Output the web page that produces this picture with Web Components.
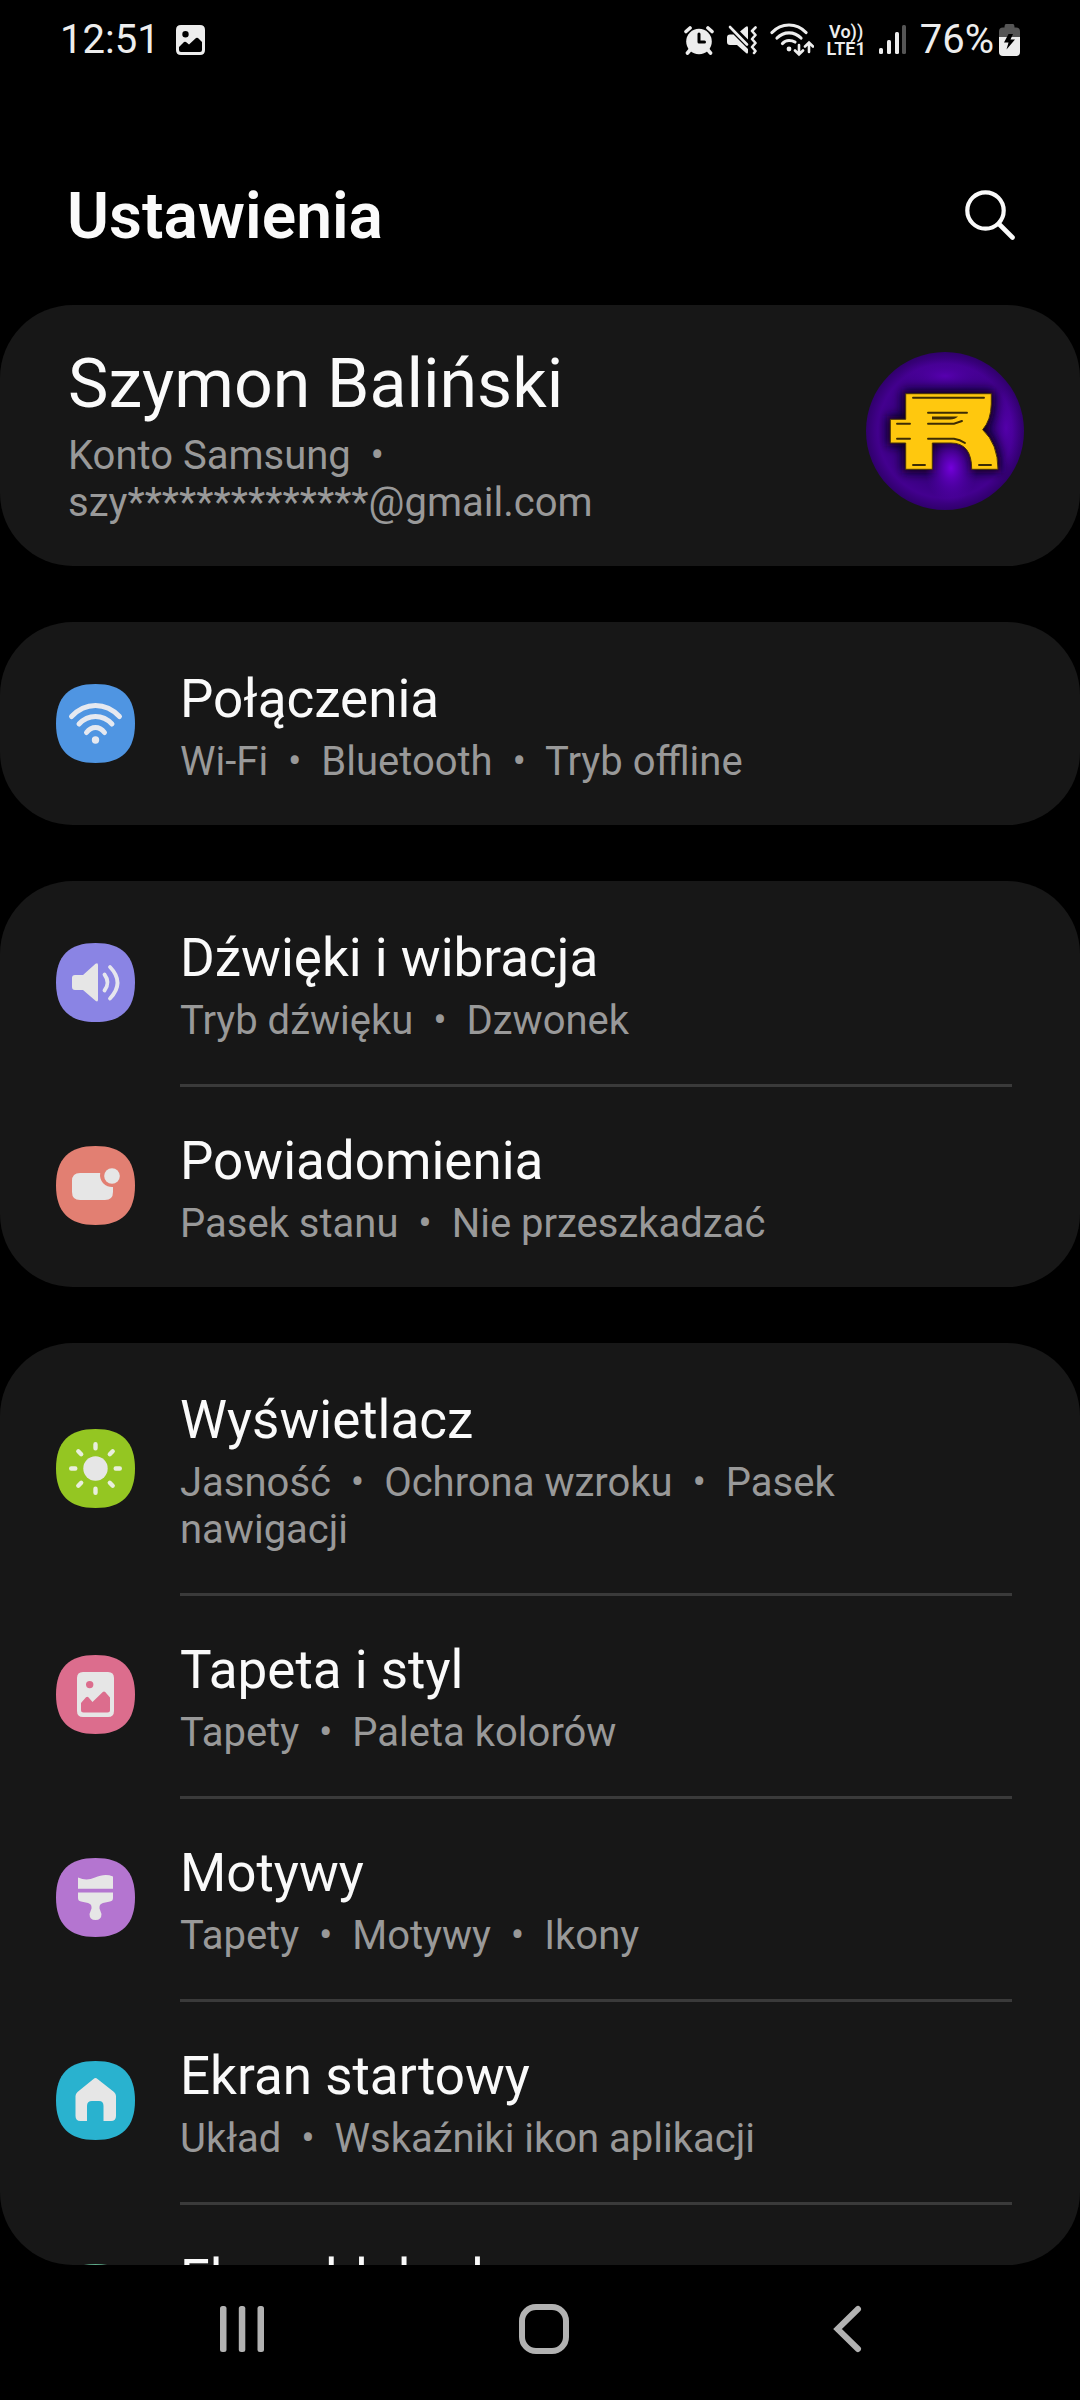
<!DOCTYPE html>
<html lang="pl">
<head>
<meta charset="utf-8">
<meta name="viewport" content="width=device-width, initial-scale=1">
<title>Ustawienia</title>
<style>
    html, body {
        margin: 0;
        height: 100%;
        background: #000;
    }
    body {
        font-family: Roboto, "Noto Sans", sans-serif;
        color: #fafafa;
    }
</style>
</head>
<body>
<settings-screen>
    <status-bar slot="status" time="12:51" battery="76%"></status-bar>
    <page-header slot="header">Ustawienia</page-header>

    <settings-card>
        <account-row>
            <span slot="name">Szymon Baliński</span>
            Konto Samsung &nbsp;•&nbsp; szy**************@gmail.com
        </account-row>
    </settings-card>

    <settings-card>
        <settings-row icon="wifi" color="#4f95e2">
            <span slot="title">Połączenia</span>
            Wi-Fi &nbsp;•&nbsp; Bluetooth &nbsp;•&nbsp; Tryb offline
        </settings-row>
    </settings-card>

    <settings-card>
        <settings-row icon="sound" color="#8a84e4">
            <span slot="title">Dźwięki i wibracja</span>
            Tryb dźwięku &nbsp;•&nbsp; Dzwonek
        </settings-row>
        <settings-row icon="notifications" color="#e27f72">
            <span slot="title">Powiadomienia</span>
            Pasek stanu &nbsp;•&nbsp; Nie przeszkadzać
        </settings-row>
    </settings-card>

    <settings-card>
        <settings-row icon="display" color="#94c622">
            <span slot="title">Wyświetlacz</span>
            Jasność &nbsp;•&nbsp; Ochrona wzroku &nbsp;•&nbsp; Pasek nawigacji
        </settings-row>
        <settings-row icon="wallpaper" color="#dc6d8d">
            <span slot="title">Tapeta i styl</span>
            Tapety &nbsp;•&nbsp; Paleta kolorów
        </settings-row>
        <settings-row icon="themes" color="#b475d0">
            <span slot="title">Motywy</span>
            Tapety &nbsp;•&nbsp; Motywy &nbsp;•&nbsp; Ikony
        </settings-row>
        <settings-row icon="home" color="#29b2cf">
            <span slot="title">Ekran startowy</span>
            Układ &nbsp;•&nbsp; Wskaźniki ikon aplikacji
        </settings-row>
        <settings-row icon="lock" color="#5fae8c">
            <span slot="title">Ekran blokady</span>
        </settings-row>
    </settings-card>

    <nav-bar slot="nav"></nav-bar>
</settings-screen>

<script>
// glyphs inside the coloured 79x79 tiles
const icons = {
    wifi: `
        <g fill="none" stroke="#e6e9f0" stroke-width="5" stroke-linecap="round">
            <path d="M15.500 32.500Q26 21.500 39.500 21.500T63.500 32.500"/>
            <path d="M23 40Q30 32.500 39.500 32.500T56 40"/>
            <path d="M30.500 48.500Q34.500 43.500 39.500 43.500T48.500 48.500"/>
        </g>
        <circle cx="39.500" cy="56" r="3.700" fill="#e6e9f0"/>`,
    sound: `
        <path fill="#e6e6e6" d="M19 32H27L39.500 20.800Q42 19 42 22V56.500Q42 59.500 39.500 57.700L27 47H19Q16 47 16 44V35Q16 32 19 32Z"/>
        <g fill="none" stroke="#e6e6ee" stroke-width="3.800" stroke-linecap="round">
            <path d="M48.500 31.500Q54.500 39.500 48.500 47.500"/>
            <path d="M54 24Q69 39.500 54 55.500"/>
        </g>`,
    notifications: `
        <path fill="#e6e6e6" d="M24 27H44.200A12 12 0 0 0 57 41V46Q57 54 49 54H24Q16 54 16 46V35Q16 27 24 27Z"/>
        <circle cx="56" cy="30" r="7.800" fill="#e6e6e6"/>`,
    display: `
        <circle cx="39.500" cy="39.500" r="12.200" fill="#e6e6e6"/>
        <g stroke="#e9eedd" stroke-width="4.400" stroke-linecap="round">
            <path d="M39.500 15.200V19.300M39.500 59.700V63.800M15.200 39.500H19.300M59.700 39.500H63.800"/>
            <path d="M22.300 22.300L25.200 25.200M53.800 53.800L56.700 56.700M22.300 56.700L25.200 53.800M53.800 25.200L56.700 22.300"/>
        </g>`,
    wallpaper: `
        <path fill="#e6e6e6" fill-rule="evenodd" d="M27 17H52Q58 17 58 23V56Q58 62 52 62H27Q21 62 21 56V23Q21 17 27 17Z
            M25 48L30 42.300Q31.200 41 32.400 42.300L36.500 47L46.800 37Q48 36 49.200 37L54 42.500V55Q54 57.500 51.500 57.500H27.500Q25 57.500 25 55Z
            M33.700 25.900A3.700 3.700 0 1 0 33.700 33.300A3.700 3.700 0 1 0 33.700 25.900Z"/>`,
    themes: `
        <path fill="#e6e6e6" d="M22 19.500C28 22 33 22 39 19.500C45 17 51 16 57 18.500V30.700H22Z"/>
        <path fill="#e6e6e6" d="M22 34.500H57V40Q57 43 54 43.500L47 45Q43.500 46 43.500 49V50.500L45.500 56Q45.500 62 39.500 62T33.500 56L35.500 50.500V49Q35.500 46 32 45L25 43.500Q22 43 22 40Z"/>`,
    home: `
        <path fill="#e6e6e6" d="M37.500 18Q39.500 16.200 41.500 18L58 31Q60 32.800 60 35V55Q60 60 55 60H47.500V45Q47.500 40 43 40H36Q31 40 31 45V60H24.500Q19.500 60 19.500 55V35Q19.500 32.800 21.500 31Z"/>`,
    lock: `
        <rect x="24" y="36" width="31" height="24" rx="5" fill="#e6e6e6"/>
        <path fill="none" stroke="#e6e6e6" stroke-width="5" d="M30 37V29Q30 20 39.500 20T49 29V37"/>`
};

function makeTemplate(html) {
    const template = document.createElement('template');
    template.innerHTML = html;
    return template;
}

const screenTemplate = makeTemplate(`
    <style>
    :host {
        display: flex;
        flex-direction: column;
        height: 100vh;
    }
    .list {
        flex: 1;
        min-height: 0;
        display: flex;
        flex-direction: column;
        gap: 56px;
        overflow: hidden;
        border-radius: 0 0 73px 73px;
    }
    ::slotted(*) {
        flex-shrink: 0;
    }
    </style>
    <slot name="status"></slot>
    <slot name="header"></slot>
    <main class="list"><slot></slot></main>
    <slot name="nav"></slot>
`);

class SettingsScreen extends HTMLElement {
    constructor() {
        super();
        this.attachShadow({mode: 'open'});
        this.shadowRoot.appendChild(screenTemplate.content.cloneNode(true));
    }
}

const statusTemplate = makeTemplate(`
    <style>
    :host {
        display: flex;
        justify-content: space-between;
        align-items: center;
        height: 80px;
        padding: 0 60px;
        font-size: 40px;
        line-height: 48px;
        color: #ededed;
    }
    div {
        display: flex;
        align-items: center;
        gap: 13px;
    }
    .left {
        gap: 16px;
    }
    .power {
        gap: 5px;
    }
    .volte {
        display: block;
        font-size: 18px;
        line-height: 17px;
        font-weight: 600;
        text-align: center;
    }
    svg {
        display: block;
        fill: #ededed;
    }
    </style>
    <div class="left">
        <span class="time"></span>
        <svg width="29" height="30" viewBox="0 0 29 30">
            <path fill-rule="evenodd" d="M5 0H24Q29 0 29 5V25Q29 30 24 30H5Q0 30 0 25V5Q0 0 5 0Z
                M3 22L8 17Q9 16.300 10 17L13 19.500L20 13Q21 12.300 22 13L26 17V25Q26 27 24 27H5Q3 27 3 25Z
                M9.500 6A3.200 3.200 0 1 0 9.500 12.400A3.200 3.200 0 1 0 9.500 6Z"/>
        </svg>
    </div>
    <div>
        <svg width="30" height="29" viewBox="0 0 30 29">
            <circle cx="15" cy="15.500" r="12.800"/>
            <path d="M2 5.500L6 2M28 5.500L24 2M6 24L3.500 27M24 24L26.500 27" stroke="#ededed" stroke-width="3.600" stroke-linecap="round"/>
            <path d="M15 8V16H20.500" fill="none" stroke="#000" stroke-width="3" stroke-linecap="round" stroke-linejoin="round"/>
        </svg>
        <svg width="30" height="30" viewBox="0 0 30 30">
            <path d="M3 9.500H6.500L21 24V27Q21 29.500 19 28L10 20H3Q0 20 0 17V12.500Q0 9.500 3 9.500Z"/>
            <path d="M13 6.500L18.500 2Q21 0 21 3V14.500Z"/>
            <path d="M3 2L20 19.500" stroke="#ededed" stroke-width="2.600" stroke-linecap="round"/>
            <path d="M28.500 2.500L25 6L28.500 10L25 14L28.500 18L25 22L28.500 26L27 28" fill="none" stroke="#ededed" stroke-width="2.600" stroke-linecap="round" stroke-linejoin="round"/>
        </svg>
        <svg width="44" height="34" viewBox="0 0 44 34">
            <g fill="none" stroke="#ededed" stroke-width="3.200" stroke-linecap="round">
                <path d="M2 9.500Q9 2 19 2T36 9.500"/>
                <path d="M7 15Q12 9.800 19 9.800T31 15"/>
                <path d="M12.500 20.500Q15 17.500 19 17.500Q22.500 17.500 25 19"/>
                <path d="M29 22V31M25 27.500L29 31.500L33 27.500M39 29V20M35 23.500L39 19.500L43 23.500" stroke-width="2.600"/>
            </g>
            <circle cx="19" cy="26" r="2.400"/>
        </svg>
        <span class="volte">Vo))<br>LTE1</span>
        <svg width="28" height="30" viewBox="0 0 28 30">
            <rect x="0" y="23" width="4" height="6" rx="1.500"/>
            <rect x="8" y="15" width="4" height="14" rx="1.500"/>
            <rect x="16" y="7" width="4" height="22" rx="1.500"/>
            <rect x="23" y="0" width="4" height="29" rx="1.500" fill="#555"/>
        </svg>
        <div class="power">
            <span class="battery"></span>
            <svg width="21" height="32" viewBox="0 0 21 32">
                <path fill="#555" d="M7 0H14Q15.500 0 15.500 3.500H17Q21 3.500 21 7.500V13H0V7.500Q0 3.500 4 3.500H5.500Q5.500 0 7 0Z"/>
                <path d="M0 13H21V28Q21 32 17 32H4Q0 32 0 28Z"/>
                <path fill="#000" d="M9.500 10L5 18.500H9.500L7.500 25.500L16 15.500H11.500L14 10Z"/>
            </svg>
        </div>
    </div>
`);

class StatusBar extends HTMLElement {
    constructor() {
        super();
        this.attachShadow({mode: 'open'});
        this.shadowRoot.appendChild(statusTemplate.content.cloneNode(true));
    }
    connectedCallback() {
        this.shadowRoot.querySelector('.time').textContent = this.getAttribute('time');
        this.shadowRoot.querySelector('.battery').textContent = this.getAttribute('battery');
    }
}

const headerTemplate = makeTemplate(`
    <style>
    :host {
        display: flex;
        justify-content: space-between;
        align-items: center;
        box-sizing: border-box;
        height: 225px;
        padding: 48px 64px 0 67px;
    }
    h1 {
        margin: 0;
        font-size: 64px;
        line-height: 76px;
        font-weight: 600;
    }
    button {
        padding: 0 0 6px;
        border: none;
        background: none;
        cursor: pointer;
    }
    svg {
        display: block;
    }
    </style>
    <h1><slot></slot></h1>
    <button aria-label="Szukaj">
        <svg width="52" height="52" viewBox="0 0 52 52" fill="none" stroke="#fafafa" stroke-linecap="round">
            <circle cx="21.500" cy="22.500" r="18.200" stroke-width="4.200"/>
            <path d="M35 36L48.500 49.500" stroke-width="4.600"/>
        </svg>
    </button>
`);

class PageHeader extends HTMLElement {
    constructor() {
        super();
        this.attachShadow({mode: 'open'});
        this.shadowRoot.appendChild(headerTemplate.content.cloneNode(true));
    }
}

const cardTemplate = makeTemplate(`
    <style>
    :host {
        display: block;
        background: #171717;
        border-radius: 73px;
        overflow: hidden;
    }
    </style>
    <slot></slot>
`);

class SettingsCard extends HTMLElement {
    constructor() {
        super();
        this.attachShadow({mode: 'open'});
        this.shadowRoot.appendChild(cardTemplate.content.cloneNode(true));
    }
    connectedCallback() {
        // every row but the first one draws a line above itself
        this.shadowRoot.querySelector('slot').assignedElements().forEach((row, i) => {
            row.toggleAttribute('divided', i > 0);
        });
    }
}

const accountTemplate = makeTemplate(`
    <style>
    :host {
        display: block;
    }
    a {
        display: flex;
        align-items: center;
        justify-content: space-between;
        gap: 24px;
        padding: 39px 56px 40px 68px;
        color: inherit;
        text-decoration: none;
    }
    .name {
        font-size: 68px;
        line-height: 80px;
        margin-bottom: 8px;
    }
    .info {
        font-size: 40px;
        line-height: 47px;
        color: #999;
    }
    svg {
        display: block;
        flex-shrink: 0;
        margin-bottom: 8px;
    }
    </style>
    <a href="#account">
        <div>
            <div class="name"><slot name="name"></slot></div>
            <div class="info"><slot></slot></div>
        </div>
        <svg width="158" height="158" viewBox="0 0 158 158" role="img" aria-label="Zdjęcie profilowe">
            <defs>
                <radialGradient id="base">
                    <stop offset="0" stop-color="#20004c"/>
                    <stop offset="0.600" stop-color="#35007c"/>
                    <stop offset="0.850" stop-color="#43008f"/>
                    <stop offset="1" stop-color="#30006c"/>
                </radialGradient>
                <radialGradient id="glow">
                    <stop offset="0" stop-color="#7400dc"/>
                    <stop offset="1" stop-color="#5200ac" stop-opacity="0"/>
                </radialGradient>
                <filter id="shade" x="-20%" y="-20%" width="140%" height="140%">
                    <feGaussianBlur stdDeviation="5"/>
                </filter>
                <path id="mark" d="M39.700 41.700H125.300V52Q125 68 116.700 77.700Q132 92 132 117.300H105.700Q105.700 91 85 91H66.300V117.300H39.700V91H24.300V67.300H39.700Z"/>
            </defs>
            <circle cx="79" cy="79" r="79" fill="url(#base)"/>
            <ellipse cx="79" cy="24" rx="46" ry="18" fill="url(#glow)" opacity="0.500"/>
            <ellipse cx="140" cy="76" rx="16" ry="40" fill="url(#glow)" opacity="0.400"/>
            <use href="#mark" fill="#0c001c" stroke="#0c001c" stroke-width="7" filter="url(#shade)"/>
            <ellipse cx="85" cy="116" rx="26" ry="36" fill="url(#glow)"/>
            <use href="#mark" fill="#ffc80e" stroke="#4d3606" stroke-width="1"/>
            <g fill="none" stroke="#3d2c04" stroke-width="1.900" stroke-linecap="round">
                <path d="M47 45.700H118M62 60.700H101M31 71.700H44M31 86.700H44M47 113H59M113 113H125"/>
                <path d="M62 71.700H88L96 69M62 86.700H88Q94 87.500 99 91"/>
            </g>
            <path fill="#3d2c04" d="M66 64.500H92Q89 67.500 84 67.500H66Z"/>
        </svg>
    </a>
`);

class AccountRow extends HTMLElement {
    constructor() {
        super();
        this.attachShadow({mode: 'open'});
        this.shadowRoot.appendChild(accountTemplate.content.cloneNode(true));
    }
}

const rowTemplate = makeTemplate(`
    <style>
    :host {
        display: block;
    }
    a {
        display: flex;
        align-items: center;
        min-height: 203px;
        padding-left: 56px;
        gap: 45px;
        color: inherit;
        text-decoration: none;
    }
    svg {
        display: block;
        flex-shrink: 0;
    }
    .text {
        flex: 1;
        align-self: stretch;
        box-sizing: border-box;
        margin-right: 68px;
        padding: 46px 0 40px;
    }
    :host([divided]) .text {
        border-top: 3px solid #3a3a3a;
        padding-top: 43px;
    }
    .title {
        font-size: 53px;
        line-height: 62px;
        margin-bottom: 8px;
    }
    .info {
        font-size: 40px;
        line-height: 47px;
        color: #999;
    }
    </style>
    <a>
        <svg width="79" height="79" viewBox="0 0 79 79" aria-hidden="true">
            <path class="tile" d="M39.500 0C66 0 79 13 79 39.500S66 79 39.500 79S0 66 0 39.500S13 0 39.500 0Z"/>
            <g class="glyph"></g>
        </svg>
        <div class="text">
            <div class="title"><slot name="title"></slot></div>
            <div class="info"><slot></slot></div>
        </div>
    </a>
`);

class SettingsRow extends HTMLElement {
    constructor() {
        super();
        this.attachShadow({mode: 'open'});
        this.shadowRoot.appendChild(rowTemplate.content.cloneNode(true));
    }
    connectedCallback() {
        const icon = this.getAttribute('icon');
        this.shadowRoot.querySelector('a').href = '#' + icon;
        this.shadowRoot.querySelector('.tile').setAttribute('fill', this.getAttribute('color'));
        this.shadowRoot.querySelector('.glyph').innerHTML = icons[icon];
    }
}

const navTemplate = makeTemplate(`
    <style>
    :host {
        display: block;
    }
    nav {
        display: grid;
        grid-template-columns: repeat(3, 1fr);
        height: 128px;
        padding: 0 82px 7px 91px;
    }
    button {
        display: flex;
        align-items: center;
        justify-content: center;
        padding: 0;
        border: none;
        background: none;
        cursor: pointer;
    }
    </style>
    <nav>
        <button aria-label="Ostatnie">
            <svg width="50" height="50" viewBox="0 0 50 50" fill="#b2b2b2">
                <rect x="3" y="2" width="6.500" height="46" rx="2.500"/>
                <rect x="21.800" y="2" width="6.500" height="46" rx="2.500"/>
                <rect x="40.500" y="2" width="6.500" height="46" rx="2.500"/>
            </svg>
        </button>
        <button aria-label="Ekran główny">
            <svg width="50" height="50" viewBox="0 0 50 50">
                <rect x="3" y="3" width="44" height="44" rx="14" fill="none" stroke="#b2b2b2" stroke-width="6"/>
            </svg>
        </button>
        <button aria-label="Wstecz">
            <svg width="50" height="50" viewBox="0 0 50 50">
                <path d="M36 5L15.500 25L36 45" fill="none" stroke="#b2b2b2" stroke-width="6" stroke-linecap="round"/>
            </svg>
        </button>
    </nav>
`);

class NavBar extends HTMLElement {
    constructor() {
        super();
        this.attachShadow({mode: 'open'});
        this.shadowRoot.appendChild(navTemplate.content.cloneNode(true));
    }
}

customElements.define('settings-screen', SettingsScreen);
customElements.define('status-bar', StatusBar);
customElements.define('page-header', PageHeader);
customElements.define('settings-card', SettingsCard);
customElements.define('account-row', AccountRow);
customElements.define('settings-row', SettingsRow);
customElements.define('nav-bar', NavBar);
</script>
</body>
</html>
